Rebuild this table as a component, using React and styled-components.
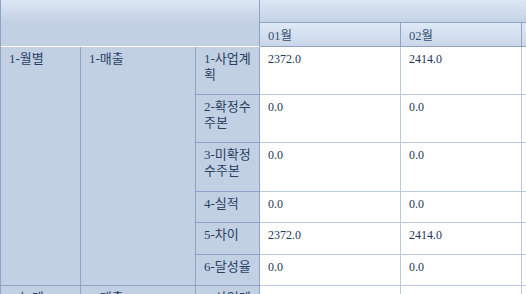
import React from "react";
import styled, { createGlobalStyle } from "styled-components";

const GlobalStyle = createGlobalStyle`
  html, body {
    margin: 0;
    padding: 0;
    background: #ffffff;
    overflow: hidden;
  }
  body {
    font-family: "Liberation Serif", "Noto Sans CJK KR", serif;
    font-size: 12px;
  }
`;

const DARK = "#8fa4c4";
const LIGHT = "#b9c9e0";
const HEAD_BG = "#c1d0e3";

const Grid = styled.div`
  display: grid;
  grid-template-columns: 80px 115px 64px 141px 121px 121px;
  grid-template-rows: 23px 24px 48px 48px 49px 31px 32px 31px 48px;
  border-left: 1px solid ${DARK};
  width: max-content;
`;

const Corner = styled.div`
  grid-column: 1 / span 3;
  grid-row: 1 / span 2;
  box-sizing: border-box;
  background: linear-gradient(to bottom, #dde8f5 0px, #c2d0e3 22px, ${HEAD_BG} 100%);
  border-right: 1px solid ${DARK};
  border-bottom: 1px solid #ffffff;
`;

const TopBand = styled.div`
  grid-column: 4 / span 3;
  grid-row: 1;
  box-sizing: border-box;
  background: linear-gradient(to bottom, #dde8f5, #c4d2e5);
  border-bottom: 1px solid ${DARK};
`;

const MonthHead = styled.div`
  grid-row: 2;
  box-sizing: border-box;
  display: flex;
  align-items: center;
  padding-left: 8px;
  color: #3c5272;
  font-size: 12.5px;
  background: linear-gradient(to bottom, #dfe9f6, #c9d7ea);
  border-right: 1px solid ${DARK};
  border-bottom: 1px solid ${DARK};
`;

const RowHead = styled.div`
  grid-column: ${(p) => p.$col};
  grid-row: ${(p) => p.$row} / span ${(p) => p.$span || 1};
  box-sizing: border-box;
  background: ${HEAD_BG};
  color: #2a3f62;
  font-size: 13px;
  padding: 4px 4px 0 ${(p) => (p.$col === 3 ? 8 : 8)}px;
  line-height: 16px;
  border-right: 1px solid ${DARK};
  border-bottom: 1px solid ${DARK};
  overflow: hidden;
`;

const DataCell = styled.div`
  grid-column: ${(p) => p.$col};
  grid-row: ${(p) => p.$row};
  box-sizing: border-box;
  background: #ffffff;
  color: #1f355a;
  padding: 5px 4px 0 8px;
  line-height: 15px;
  border-right: 1px solid ${LIGHT};
  border-bottom: 1px solid ${LIGHT};
  overflow: hidden;
`;

const months = ["01월", "02월", ""];

const items = [
  { label: "1-사업계획", values: ["2372.0", "2414.0", ""] },
  { label: "2-확정수주본", values: ["0.0", "0.0", ""] },
  { label: "3-미확정수주본", values: ["0.0", "0.0", ""] },
  { label: "4-실적", values: ["0.0", "0.0", ""] },
  { label: "5-차이", values: ["2372.0", "2414.0", ""] },
  { label: "6-달성율", values: ["0.0", "0.0", ""] },
];

export default function App() {
  return (
    <>
      <GlobalStyle />
      <Grid>
        <Corner />
        <TopBand />
        {months.map((m, i) => (
          <MonthHead key={i} style={{ gridColumn: i + 4 }}>
            {m}
          </MonthHead>
        ))}

        <RowHead $col={1} $row={3} $span={6}>1-월별</RowHead>
        <RowHead $col={2} $row={3} $span={6}>1-매출</RowHead>
        {items.map((it, r) => (
          <React.Fragment key={it.label}>
            <RowHead $col={3} $row={r + 3}>{it.label}</RowHead>
            {it.values.map((v, c) => (
              <DataCell key={c} $col={c + 4} $row={r + 3}>
                {v}
              </DataCell>
            ))}
          </React.Fragment>
        ))}

        <RowHead $col={1} $row={9}>2-누계</RowHead>
        <RowHead $col={2} $row={9}>1-매출</RowHead>
        <RowHead $col={3} $row={9}>1-사업계획</RowHead>
        <DataCell $col={4} $row={9}>2372.0</DataCell>
        <DataCell $col={5} $row={9}>4786.0</DataCell>
        <DataCell $col={6} $row={9}></DataCell>
      </Grid>
    </>
  );
}
